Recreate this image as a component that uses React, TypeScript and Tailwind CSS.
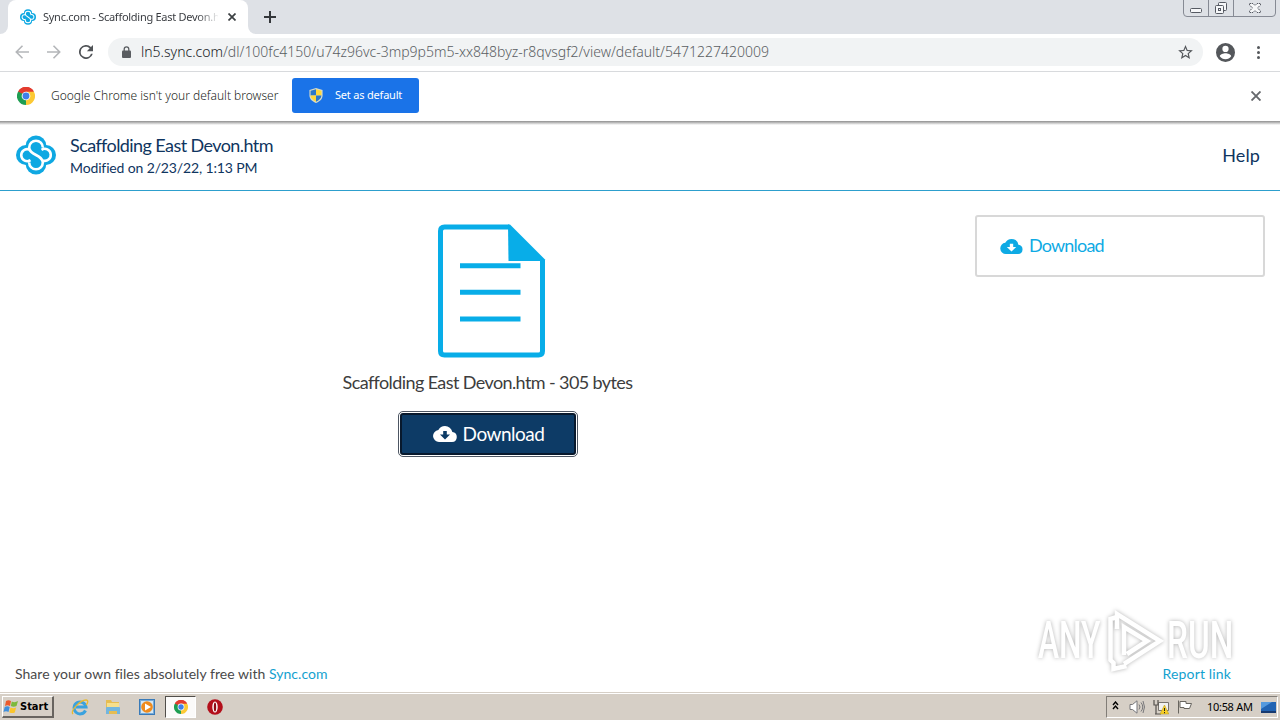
import React from 'react';

const CloudIcon: React.FC<{ className?: string }> = ({ className }) => (
    <svg viewBox="0 0 24 16" className={className} fill="currentColor">
        <path
            fillRule="evenodd"
            d="M19.35 6.04A7.49 7.49 0 0 0 12 0 7.5 7.5 0 0 0 5.35 4.04 6 6 0 0 0 6 16h13a5 5 0 0 0 .35-9.96zM10.2 5h3.6v3.6H17l-5 4.8-5-4.8h3.2z"
        />
    </svg>
);

const SyncLogo: React.FC<{ className?: string }> = ({ className }) => (
    <svg viewBox="0 0 40 40" className={className} fill="none">
        <g fill="#0fa8e2">
            <circle cx="20" cy="10.7" r="10.3" />
            <circle cx="20" cy="29.3" r="10.3" />
            <circle cx="10" cy="20" r="10" />
            <circle cx="30" cy="20" r="10" />
        </g>
        <path
            d="M26.8 12.5A6.8 6.8 0 0 0 13.2 12.5C13.2 20.500 26.8 19.500 26.8 27.500A6.8 6.8 0 0 1 13.2 27.500M13.2 14.500A6 6 0 1 0 14.500 25.200M26.8 25.500A6 6 0 1 0 25.500 14.800"
            stroke="#fff"
            strokeWidth="2.600"
        />
    </svg>
);

const ChromeLogo: React.FC<{ className?: string }> = ({ className }) => (
    <svg viewBox="0 0 24 24" className={className}>
        <path d="M12 12L1.6 6A12 12 0 0 1 22.4 6z" fill="#e33b2e" />
        <path d="M12 12L22.4 6A12 12 0 0 1 12 24z" fill="#fcc934" />
        <path d="M12 12v12A12 12 0 0 1 1.6 6z" fill="#1e9e52" />
        <path d="M12 6h10.4L17 15z" fill="#fcc934" />
        <path d="M7 15L1.6 6l5 0L12 12z" fill="#1e9e52" />
        <path d="M1.6 6A12 12 0 0 1 22.4 6H12a6 6 0 0 0-5.2 3z" fill="#e33b2e" />
        <circle cx="12" cy="12" r="5.8" fill="#fff" />
        <circle cx="12" cy="12" r="4.6" fill="#3f7fe8" />
    </svg>
);

const ShieldIcon: React.FC = () => (
    <svg viewBox="0 0 14 16" className="h-[15px] w-3.5">
        <path d="M7 0L14 2v6c0 4-3.5 6.500-7 8-3.500-1.500-7-4-7-8V2z" fill="#d9dcc8" />
        <path d="M7 1.300V8H1.200V2.900z" fill="#2b78c9" />
        <path d="M7 1.300V8h5.800V2.900z" fill="#ffd83a" />
        <path d="M7 8v6.600C3.500 13 1.400 11 1.200 8z" fill="#ffd83a" />
        <path d="M7 8v6.600c3.500-1.600 5.600-3.600 5.800-6.600z" fill="#2b78c9" />
    </svg>
);

const WindowControls: React.FC = () => (
    <svg viewBox="0 0 94 18" className="h-[18px] w-[94px]" fill="none" stroke="#868a94">
        <path d="M.5 0v13q0 3.500 3.500 3.500h85q3.500 0 3.500-3.500V0M25.500 0v16M50.500 0v16" />
        <g stroke="#565a63" fill="#f6f7f9">
            <rect x="7.500" y="8.500" width="11" height="4" rx="1" />
            <rect x="35.500" y="2.500" width="8" height="8" rx="1" />
            <rect x="32.500" y="5.500" width="8" height="8" rx="1" />
            <rect x="35.500" y="8.500" width="2" height="2" />
            <path d="M66.500 3.500h3.500l2 2 2-2h3.500v1.500l-3 3 3 3v1.500H74l-2-2-2 2h-3.500V11l3-3-3-3z" strokeDasharray="1.500 .7" />
        </g>
    </svg>
);

const TabStrip: React.FC = () => (
    <div className="flex h-[34px] bg-[#dee1e6]">
        <div className="flex w-2 bg-white">
            <div className="h-full w-full rounded-br-lg bg-[#dee1e6]" />
        </div>
        <div className="flex w-[240px] items-center rounded-t-lg bg-white pl-3">
            <SyncLogo className="h-4 w-4 shrink-0" />
            <div className="ml-[7px] w-[175px] whitespace-nowrap bg-linear-to-r from-[#35383d] from-88% to-[#f4f4f4] bg-clip-text text-[11px] tracking-[-0.27px] text-transparent">
                Sync.com - Scaffolding East Devon.h
            </div>
            <svg viewBox="0 0 8 8" className="ml-[10px] h-2 w-2" stroke="#3c4043" strokeWidth="1.700">
                <path d="M.5.5l7 7M7.500.5l-7 7" />
            </svg>
        </div>
        <div className="flex flex-1 bg-white">
            <div className="flex flex-1 justify-between rounded-bl-lg bg-[#dee1e6] pl-4">
                <svg viewBox="0 0 12 12" className="mt-[11px] h-3 w-3" stroke="#34373b" strokeWidth="2">
                    <path d="M6 0v12M0 6h12" />
                </svg>
                <div className="pr-[3px]">
                    <WindowControls />
                </div>
            </div>
        </div>
    </div>
);

const Toolbar: React.FC = () => (
    <div className="flex h-[38px] items-center border-b border-[#d8dadd] bg-white pb-px pl-[15px]">
        <svg viewBox="0 0 14 14" className="h-3.5 w-3.5" stroke="#b4b6b9" strokeWidth="1.600" fill="none">
            <path d="M14 7H1.500M7.500.8L1.300 7l6.200 6.200" />
        </svg>
        <svg viewBox="0 0 14 14" className="ml-[18px] h-3.5 w-3.5" stroke="#b4b6b9" strokeWidth="1.600" fill="none">
            <path d="M0 7h12.500M6.500.8L12.700 7l-6.200 6.200" />
        </svg>
        <svg viewBox="4 4 16 16" className="ml-[18px] h-3.5 w-3.5" fill="#505357">
            <path d="M17.650 6.350A8 8 0 1 0 19.730 14h-2.080A6 6 0 1 1 12 6c1.660 0 3.140.69 4.220 1.780L13 11h7V4z" />
        </svg>
        <div className="ml-[15px] flex h-7 w-[1095px] items-center rounded-full bg-[#f1f3f4] pl-[14px] pr-[10px]">
            <svg viewBox="0 0 9 12" className="h-3 w-[9px]">
                <rect y="4.500" width="9" height="7.500" rx="1" fill="#5a5d61" />
                <path d="M2.200 5V3.200a2.300 2.300 0 0 1 4.600 0V5" stroke="#5a5d61" strokeWidth="1.300" fill="none" />
            </svg>
            <div className="ml-[10px] flex-1 whitespace-nowrap text-sm font-light text-[#5a5e63]">
                <span className="text-[#15181c]">ln5.sync.com</span>/dl/100fc4150/u74z96vc-3mp9p5m5-xx848byz-r8qvsgf2/view/default/5471227420009
            </div>
            <svg viewBox="2 2 20 19" className="h-[14px] w-[15px]" fill="#54575b">
                <path d="M22 9.240l-7.190-.62L12 2 9.190 8.630 2 9.240l5.460 4.730L5.820 21 12 17.270 18.180 21l-1.630-7.030zM12 15.400l-3.760 2.270 1-4.280-3.320-2.880 4.380-.38L12 6.100l1.710 4.040 4.380.38-3.320 2.880 1 4.280z" />
            </svg>
        </div>
        <svg viewBox="2 2 20 20" className="ml-[13px] h-[19px] w-[19px]" fill="#54575b">
            <path d="M12 2a10 10 0 1 0 0 20 10 10 0 0 0 0-20zm0 3a3.300 3.300 0 1 1 0 6.600A3.300 3.300 0 0 1 12 5zm0 14.200a7.200 7.200 0 0 1-6-3.220c.03-1.990 4-3.080 6-3.080s5.970 1.090 6 3.080a7.200 7.200 0 0 1-6 3.220z" />
        </svg>
        <svg viewBox="0 0 3 13" className="ml-[22px] h-[13px] w-[3px]" fill="#54575b">
            <circle cx="1.500" cy="1.500" r="1.500" />
            <circle cx="1.500" cy="6.500" r="1.500" />
            <circle cx="1.500" cy="11.500" r="1.500" />
        </svg>
    </div>
);

const InfoBar: React.FC = () => (
    <div className="flex h-[49px] items-center bg-white pb-0.5 pl-[17px] pr-[19px]">
        <ChromeLogo className="h-[18px] w-[18px]" />
        <div className="ml-4 w-[241px] whitespace-nowrap text-xs font-light text-[#1c1f23]">Google Chrome isn't your default browser</div>
        <button className="flex h-[35px] w-[127px] items-center rounded-[3px] bg-[#1a73e8] pl-[17px] text-white">
            <ShieldIcon />
            <span className="ml-3 whitespace-nowrap text-[11px] tracking-[-0.2px]">Set as default</span>
        </button>
        <svg viewBox="0 0 10 10" className="ml-auto h-2.5 w-2.5" stroke="#66696d" strokeWidth="1.900">
            <path d="M.5.5l9 9M9.500.5l-9 9" />
        </svg>
    </div>
);

const FileIcon: React.FC = () => (
    <svg viewBox="0 0 108 134" className="h-[134px] w-[108px]">
        <path d="M71 3H6.500q-4 0-4 4v120q0 4 4 4h94q4 0 4-4V36" fill="none" stroke="#08ade8" strokeWidth="5" />
        <path d="M70 .5h2L107 35.500V37H70.500z" fill="#08ade8" />
        <path d="M22 41.700h60.500M22 68.200h60.500M22 95h60.500" stroke="#08ade8" strokeWidth="5" />
    </svg>
);

const Watermark: React.FC = () => (
    <div className="absolute left-[1038px] top-[610px] flex h-[62px] w-[196px] items-center text-white drop-shadow-[0_0_2px_rgba(0,0,0,0.3)]">
        <div className="w-[66px] font-['Roboto',sans-serif] text-[52px] font-medium leading-[62px]">
            <span className="inline-block origin-left scale-x-[0.61]">ANY</span>
        </div>
        <svg viewBox="0 0 60 62" className="h-[62px] w-[60px] shrink-0" fill="none" stroke="#fff" strokeWidth="4.500">
            <path d="M13 19V4l43 27-36 23M20 45V17l23 14-20 13M13 7L6.500 9v41l3 3v6l13-3" />
        </svg>
        <div className="ml-[3px] font-['Roboto',sans-serif] text-[52px] font-medium leading-[62px]">
            <span className="inline-block origin-left scale-x-[0.64]">RUN</span>
        </div>
    </div>
);

const SyncPage: React.FC = () => (
    <div className="flex h-[571px] flex-col bg-white font-['Lato',sans-serif]">
        <div className="h-1 bg-linear-to-b from-[#8f8f8f] to-white" />
        <header className="flex h-[66px] items-center border-b border-[#2d9fcd] pb-[5px] pl-4 pr-5 text-[#0f3560]">
            <SyncLogo className="h-10 w-10" />
            <div className="ml-[14px] mt-0.5 whitespace-nowrap">
                <div className="text-lg leading-[23px] tracking-[-0.58px]">Scaffolding East Devon.htm</div>
                <div className="text-sm leading-[21px] tracking-[-0.14px]">Modified on 2/23/22, 1:13 PM</div>
            </div>
            <div className="ml-auto text-lg tracking-[0.1px]">Help</div>
        </header>
        <main className="flex flex-1">
            <section className="flex w-[975px] flex-col items-center pt-[33px]">
                <div className="ml-[8px]">
                    <FileIcon />
                </div>
                <div className="mt-[11px] whitespace-nowrap text-lg leading-[26px] tracking-[-0.6px] text-[#3d3d3d]">Scaffolding East Devon.htm - 305 bytes</div>
                <button className="mt-[18px] flex h-[42px] w-[176px] items-center justify-center rounded-[3px] border-2 border-[#08192d] bg-[#0d3b66] pl-0.5 text-[19px] tracking-[-0.5px] text-white outline-1 outline-offset-1 outline-[#4d5663]">
                    <CloudIcon className="mr-[6px] h-4 w-6" />
                    Download
                </button>
            </section>
            <aside className="pt-6">
                <div className="flex h-[62px] w-[290px] items-center rounded-[3px] border-2 border-[#d8d8d8] pb-0.5 pl-[23px] text-lg tracking-[-0.8px] text-[#0eaae4]">
                    <CloudIcon className="mr-[6px] mt-0.5 h-[15px] w-[23px]" />
                    Download
                </div>
            </aside>
        </main>
        <footer className="flex h-9 justify-between pl-[15px] pr-[49px] text-sm leading-9 text-[#4a4a4a]">
            <div className="tracking-[0.04px]">
                Share your own files absolutely free with <span className="text-[#14a1cf]">Sync.com</span>
            </div>
            <div className="tracking-[0.15px] text-[#14a1cf]">Report link</div>
        </footer>
    </div>
);

const Taskbar: React.FC = () => (
    <div className="flex h-7 items-start border-t border-[#d6cfc6] bg-[#d6cfc6]">
        <div className="flex h-full w-full items-start border-t border-white pl-0.5">
            <div className="mt-0.5 flex h-[22px] w-[52px] items-center border-b-2 border-l border-r-2 border-t border-b-[#68645f] border-l-white border-r-[#68645f] border-t-white">
                <svg viewBox="0 0 16 15" className="h-[15px] w-4 shrink-0">
                    <path d="M3 2q2.500-1.500 5 0L7 7q-2.500-1.300-5 0z" fill="#eb5a2c" />
                    <path d="M8.800 2.500q3 1.500 6.200-.5l-1.500 5q-3 1.500-5.700 0z" fill="#7cb93d" />
                    <path d="M1.700 8q2.600-1.500 5 0l-1.200 5q-2.500-1.500-5 0z" fill="#3f8fdc" />
                    <path d="M7.500 8.500q2.700 1.400 5.600 0l-1.300 5q-2.800 1.300-5.500-.300z" fill="#fac52c" />
                </svg>
                <span className="ml-px mt-0.5 font-['DejaVu_Sans_Condensed','DejaVu_Sans',sans-serif] text-[11px] font-bold text-black">Start</span>
            </div>
            <svg viewBox="0 0 18 18" className="ml-[17px] mt-1 h-[18px] w-[18px]" fill="none">
                <path d="M14.500 12.500A6 6 0 1 1 15 9H5" stroke="#3aa2de" strokeWidth="3" />
                <path d="M2 16C-1 13 9 2 15 2c3 0 1.500 4 0 5" stroke="#e9b92e" strokeWidth="1.300" />
            </svg>
            <svg viewBox="0 0 16 16" className="ml-4 mt-[5px] h-4 w-4">
                <path d="M1 1h5l1 2h7v12H1z" fill="#e6bd52" />
                <path d="M2 4h12v7H2z" fill="#f6df8c" />
                <path d="M1 15V9q0-1 1-1h12q1 0 1 1v6h-3v-3H4v3z" fill="#72b6df" />
            </svg>
            <svg viewBox="0 0 16 16" className="ml-[18px] mt-[5px] h-4 w-4">
                <rect x=".5" y=".5" width="15" height="15" fill="#76abd9" stroke="#397ab8" />
                <rect x="2" y="2" width="12" height="12" fill="#d5e7f3" />
                <circle cx="8" cy="8" r="5.800" fill="#ef8b1d" />
                <path d="M6 4.500L12 8l-6 3.500z" fill="#fff" />
            </svg>
            <div className="ml-[10px] mt-0.5 flex h-[22px] w-[31px] items-center justify-center border-b border-l border-r border-t border-b-white border-l-[#514e4a] border-r-white border-t-[#514e4a] bg-[#fbfaf9]">
                <ChromeLogo className="h-3.5 w-3.5" />
            </div>
            <svg viewBox="0 0 16 16" className="ml-[11px] mt-[5px] h-4 w-4">
                <circle cx="8" cy="8" r="7.800" fill="#b30f1b" />
                <ellipse cx="8" cy="8" rx="2.700" ry="5.500" fill="#fff" />
                <ellipse cx="8" cy="8" rx="1.200" ry="4.600" fill="#8f0a13" />
            </svg>
            <div className="ml-auto mr-[2px] mt-0.5 flex h-[22px] w-[172px] items-center border-b border-l border-r border-t border-b-white border-l-[#817d77] border-r-white border-t-[#817d77] pl-[5px]">
                <svg viewBox="0 0 7 9" className="h-[9px] w-[7px] -translate-y-0.5" fill="none" stroke="#000" strokeWidth="1.400">
                    <path d="M1 4l2.500-3L6 4M1 8l2.500-3L6 8" />
                </svg>
                <svg viewBox="0 0 16 14" className="ml-[10px] h-3.5 w-4" fill="none" stroke="#77777a">
                    <path d="M1 4.500h2.500L8 .8v12.400L3.500 9.500H1z" fill="#fff" />
                    <path d="M10 4.500q2 2.500 0 5M12 2.500q3.500 4.500 0 9M14 1q3 6 0 12" />
                </svg>
                <svg viewBox="0 0 16 16" className="ml-2 h-4 w-4" fill="none">
                    <path d="M5.500 3.500h10v8h-10z" fill="#f1f1ef" stroke="#77736d" />
                    <path d="M1 1v5h4V1M3 6v9M2 15h6" stroke="#55524e" strokeWidth="1.200" />
                    <path d="M11.500 6l4.300 9H7z" fill="#f8cf25" stroke="#b49618" strokeWidth=".5" />
                    <path d="M11.500 9v3M11.500 13v1.200" stroke="#222" />
                </svg>
                <svg viewBox="0 0 16 14" className="ml-2 h-3.5 w-4" fill="#fff" stroke="#68655f">
                    <path d="M1.500.5v13M3 1.500h6v2h5.500l-2 5H7v-1H3z" />
                </svg>
                <span className="ml-[14px] w-[49px] whitespace-nowrap text-[11px] tracking-[-0.3px] text-black">10:58 AM</span>
                <svg viewBox="0 0 15 13" className="ml-[5px] h-[13px] w-[15px]">
                    <path d="M0 1h15v9H0z" fill="#2264b3" />
                    <path d="M0 1h11L0 8z" fill="#559ade" />
                    <path d="M0 10h15v2H0z" fill="#173a70" />
                </svg>
            </div>
        </div>
    </div>
);

const App: React.FC = () => {
    return (
        <div className="relative flex h-[720px] w-[1280px] flex-col overflow-hidden bg-white font-['Noto_Sans',sans-serif]">
            <TabStrip />
            <Toolbar />
            <InfoBar />
            <SyncPage />
            <Taskbar />
            <Watermark />
        </div>
    );
};

export default App;
